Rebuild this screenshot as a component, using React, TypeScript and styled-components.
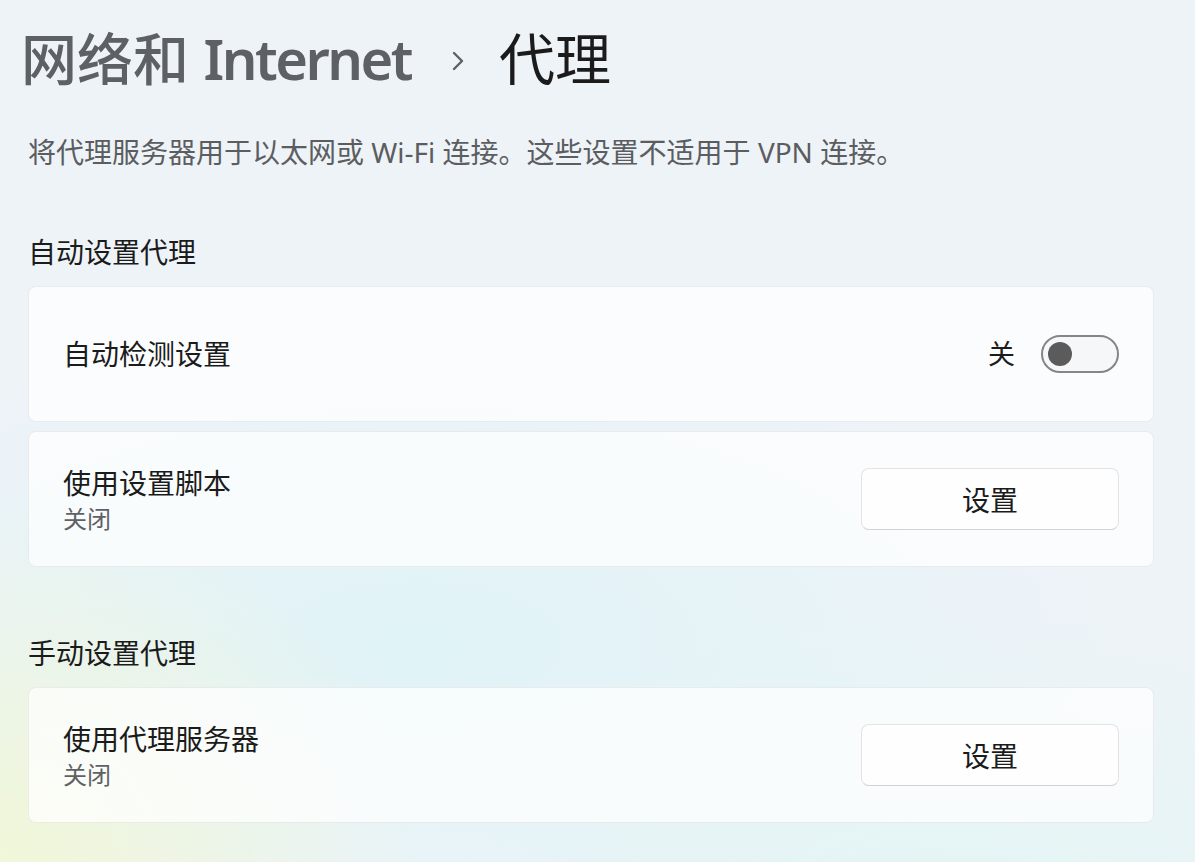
import styled, { createGlobalStyle } from 'styled-components';

const GlobalStyle = createGlobalStyle`
  html, body {
    margin: 0;
    padding: 0;
    height: 100%;
  }
  body {
    font-family: "Noto Sans", "Noto Sans CJK SC", sans-serif;
    color: #1b1b1b;
    overflow: hidden;
  }
  #root {
    min-height: 100vh;
  }
`;

const Page = styled.div`
  min-height: 100vh;
  box-sizing: border-box;
  padding: 0 41px 0 28px;
  background:
    radial-gradient(ellipse 420px 360px at 0% 100%, rgba(241, 247, 214, 0.95), rgba(241, 247, 214, 0) 100%),
    radial-gradient(ellipse 700px 320px at 35% 75%, rgba(222, 243, 246, 0.9), rgba(222, 243, 246, 0) 100%),
    radial-gradient(ellipse 600px 300px at 80% 105%, rgba(226, 245, 243, 0.9), rgba(226, 245, 243, 0) 100%),
    #eef3f8;
`;

const Breadcrumb = styled.h1`
  display: flex;
  align-items: center;
  margin: 0 0 0 -7px;
  padding-top: 25px;
  font-size: 56px;
  line-height: 67px;
  font-weight: 400;
`;

const Crumb = styled.span<{ $current?: boolean }>`
  color: ${p => (p.$current ? '#1b1b1b' : '#5d6064')};
  font-weight: ${p => (p.$current ? 400 : 500)};
`;

const LatinWord = styled.span`
  font-weight: 600;
  letter-spacing: -2.5px;
`;

const Chevron = styled.svg`
  width: 14px;
  height: 24px;
  margin: 4px 34px 0 40px;
  flex-shrink: 0;
`;

const Description = styled.p`
  margin: 40px 0 0;
  font-size: 28px;
  line-height: 40px;
  color: #5b5d60;
`;

const SectionTitle = styled.h2<{ $gap: number }>`
  margin: ${p => p.$gap}px 0 14px;
  font-size: 28px;
  line-height: 40px;
  font-weight: 400;
  color: #1b1b1b;
`;

const CardList = styled.div`
  display: flex;
  flex-direction: column;
  gap: 9px;
`;

const Card = styled.div`
  height: 136px;
  box-sizing: border-box;
  display: flex;
  align-items: center;
  justify-content: space-between;
  padding: 0 34px;
  background: rgba(255, 255, 255, 0.72);
  border: 1px solid rgba(0, 0, 0, 0.065);
  border-radius: 8px;
`;

const LabelBlock = styled.div`
  display: flex;
  flex-direction: column;
`;

const Label = styled.span`
  font-size: 28px;
  line-height: 40px;
  color: #1b1b1b;
`;

const Caption = styled.span`
  font-size: 24px;
  line-height: 32px;
  color: #5f6165;
`;

const ToggleGroup = styled.div`
  display: flex;
  align-items: center;
  gap: 26px;
`;

const ToggleText = styled.span`
  font-size: 27px;
  line-height: 40px;
  color: #1b1b1b;
`;

const Toggle = styled.button<{ $on: boolean }>`
  width: 78px;
  height: 38px;
  box-sizing: border-box;
  padding: 0 0 0 5px;
  border: 2px solid #868686;
  border-radius: 19px;
  background: rgba(0, 0, 0, 0.02);
  display: flex;
  align-items: center;
  cursor: pointer;
`;

const Knob = styled.span`
  width: 24px;
  height: 24px;
  border-radius: 50%;
  background: #5b5b5b;
`;

const ActionButton = styled.button`
  width: 258px;
  height: 62px;
  box-sizing: border-box;
  border: 1px solid #e4e4e4;
  border-bottom-color: #d2d2d2;
  border-radius: 8px;
  background: #fefefe;
  font-family: inherit;
  font-size: 28px;
  color: #1b1b1b;
  cursor: pointer;
`;

const App = () => {
  return (
    <Page>
      <GlobalStyle />
      <Breadcrumb>
        <Crumb>
          网络和 <LatinWord>Internet</LatinWord>
        </Crumb>
        <Chevron viewBox="0 0 14 24" fill="none">
          <path d="M3 4 L11 12 L3 20" stroke="#5d6064" strokeWidth="2.4" strokeLinecap="round" strokeLinejoin="round" />
        </Chevron>
        <Crumb $current>代理</Crumb>
      </Breadcrumb>

      <Description>将代理服务器用于以太网或 Wi-Fi 连接。这些设置不适用于 VPN 连接。</Description>

      <SectionTitle $gap={60}>自动设置代理</SectionTitle>
      <CardList>
        <Card>
          <Label>自动检测设置</Label>
          <ToggleGroup>
            <ToggleText>关</ToggleText>
            <Toggle $on={false} aria-label="自动检测设置">
              <Knob />
            </Toggle>
          </ToggleGroup>
        </Card>
        <Card>
          <LabelBlock>
            <Label>使用设置脚本</Label>
            <Caption>关闭</Caption>
          </LabelBlock>
          <ActionButton>设置</ActionButton>
        </Card>
      </CardList>

      <SectionTitle $gap={66}>手动设置代理</SectionTitle>
      <CardList>
        <Card>
          <LabelBlock>
            <Label>使用代理服务器</Label>
            <Caption>关闭</Caption>
          </LabelBlock>
          <ActionButton>设置</ActionButton>
        </Card>
      </CardList>
    </Page>
  );
};

export default App;
